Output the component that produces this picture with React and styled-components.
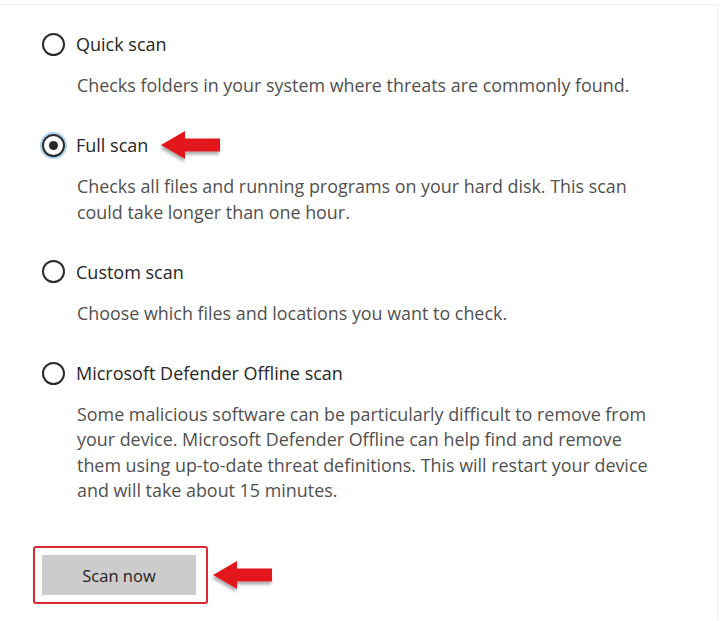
import styled, { createGlobalStyle } from "styled-components";

const GlobalStyle = createGlobalStyle`
  html, body {
    margin: 0;
    padding: 0;
    background: #ffffff;
  }
  body {
    font-family: "Open Sans", "Noto Sans", "Liberation Sans", sans-serif;
    color: #222;
  }
`;

const options = [
  {
    id: "quick",
    label: "Quick scan",
    desc: ["Checks folders in your system where threats are commonly found."],
  },
  {
    id: "full",
    label: "Full scan",
    desc: [
      "Checks all files and running programs on your hard disk. This scan",
      "could take longer than one hour.",
    ],
    pointer: true,
  },
  {
    id: "custom",
    label: "Custom scan",
    desc: ["Choose which files and locations you want to check."],
  },
  {
    id: "offline",
    label: "Microsoft Defender Offline scan",
    desc: [
      "Some malicious software can be particularly difficult to remove from",
      "your device. Microsoft Defender Offline can help find and remove",
      "them using up-to-date threat definitions. This will restart your device",
      "and will take about 15 minutes.",
    ],
  },
];

// red callout arrow pointing left, with a soft grey drop shadow
const Arrow = ({ gap }) => (
  <ArrowSvg gap={gap} width="64" height="36" viewBox="0 0 64 36">
    <defs>
      <filter id="arrowShadow" x="-20%" y="-30%" width="140%" height="170%">
        <feGaussianBlur in="SourceAlpha" stdDeviation="1.6" />
        <feOffset dx="-1" dy="2.5" result="blur" />
        <feFlood floodColor="#6b6b6b" floodOpacity="0.55" />
        <feComposite in2="blur" operator="in" />
        <feMerge>
          <feMergeNode />
          <feMergeNode in="SourceGraphic" />
        </feMerge>
      </filter>
    </defs>
    <polygon
      points="1,16 25,2 25,9.5 60,9.5 60,22.5 25,22.5 25,30"
      fill="#e3141b"
      filter="url(#arrowShadow)"
    />
  </ArrowSvg>
);

const App = () => {
  const selected = "full";

  return (
    <Panel>
      <GlobalStyle />
      <OptionList>
        {options.map((opt) => (
          <Option key={opt.id}>
            <RadioRow>
              <Radio checked={opt.id === selected} />
              <Label>{opt.label}</Label>
              {opt.pointer && <Arrow gap={12} />}
            </RadioRow>
            <Desc>
              {opt.desc.map((line) => (
                <div key={line}>{line}</div>
              ))}
            </Desc>
          </Option>
        ))}
      </OptionList>
      <ButtonRow>
        <Highlight>
          <ScanButton>Scan now</ScanButton>
        </Highlight>
        <Arrow gap={4} />
      </ButtonRow>
    </Panel>
  );
};

const Panel = styled.div`
  box-sizing: border-box;
  width: 718px;
  height: 616px;
  margin-top: 4px;
  border-top: 1px solid #f1f1f1;
  border-right: 1px solid #f1f1f1;
  padding: 26px 0 0 42px;
`;

const OptionList = styled.div`
  display: flex;
  flex-direction: column;
  gap: 34px;
`;

const Option = styled.div`
  display: flex;
  flex-direction: column;
  gap: 16px;
`;

const RadioRow = styled.div`
  display: flex;
  align-items: center;
  height: 26px;
`;

const Radio = styled.span`
  box-sizing: border-box;
  width: 23px;
  height: 23px;
  border-radius: 50%;
  border: 2px solid #2a2a2a;
  display: flex;
  align-items: center;
  justify-content: center;
  box-shadow: ${(p) => (p.checked ? "0 0 0 2px #a9d2ec" : "none")};

  &::after {
    content: "";
    display: ${(p) => (p.checked ? "block" : "none")};
    width: 9px;
    height: 9px;
    border-radius: 50%;
    background: #2b2623;
  }
`;

const Label = styled.span`
  margin-left: 11px;
  font-size: 18px;
  color: #262626;
  line-height: 26px;
`;

const ArrowSvg = styled.svg`
  display: block;
  margin-left: ${(p) => p.gap}px;
  margin-top: 3px;
`;

const Desc = styled.div`
  margin-left: 35px;
  font-size: 17.9px;
  line-height: 25.3px;
  color: #505050;
`;

const ButtonRow = styled.div`
  display: flex;
  align-items: center;
  margin-top: 43px;
  margin-left: -9px;
`;

const Highlight = styled.div`
  border: 2px solid #db2b30;
  border-radius: 3px;
  padding: 7px 10px 7px 7px;
`;

const ScanButton = styled.button`
  width: 154px;
  height: 40px;
  border: none;
  background: #cccccc;
  font-family: inherit;
  font-size: 16.5px;
  color: #222;
`;

export default App;
